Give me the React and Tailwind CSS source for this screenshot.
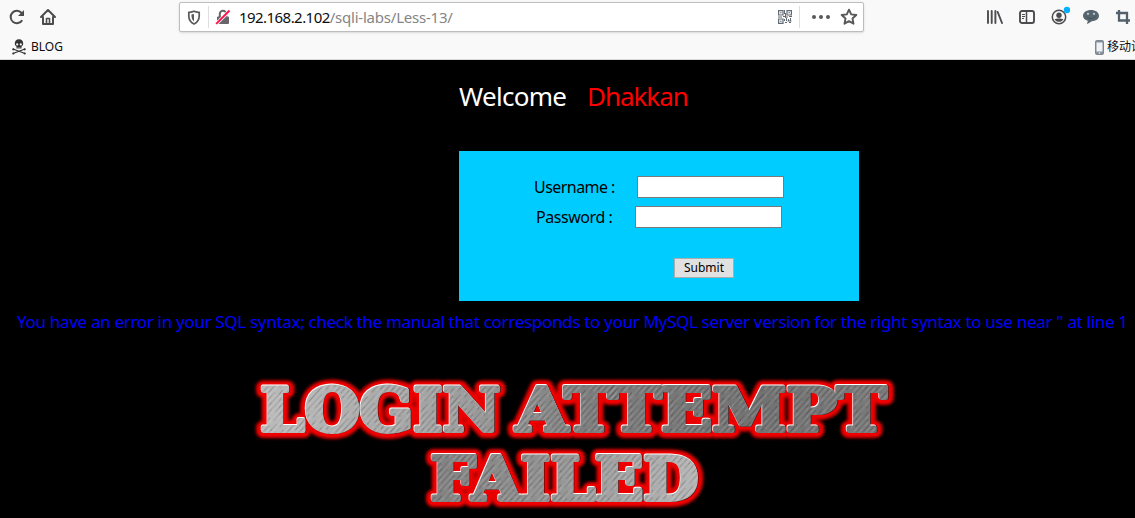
import React from "react";

const Reload = () => (
  <svg width="18" height="18" viewBox="0 0 18 18" fill="none" stroke="#4c4c4f" strokeWidth="2">
    <path d="M14.2 12.2A6.2 6.2 0 1 1 13.6 5" />
    <path d="M16 2v6h-6z" fill="#4c4c4f" stroke="none" />
  </svg>
);

const Home = () => (
  <svg width="18" height="18" viewBox="0 0 18 18" fill="none" stroke="#4c4c4f" strokeWidth="2" strokeLinecap="round" strokeLinejoin="round">
    <path d="M2 9l7-7 7 7M4 9v7h10V9" />
    <path d="M7.5 15.5v-5h3v5" strokeWidth="1.6" />
  </svg>
);

const Shield = () => (
  <svg width="14" height="15" viewBox="0 0 14 15" fill="none">
    <path d="M7 1.2c2 .9 3.700 1 5.200 1.200v3.600c0 4-2 6.500-5.200 8-3.200-1.500-5.200-4-5.200-8V2.400C3.300 2.200 5 2.100 7 1.200z" stroke="#5a5a5d" strokeWidth="1.700" />
    <path d="M7 4v7.500C5.200 10.300 4.500 8.500 4.400 4.600z" fill="#5a5a5d" />
  </svg>
);

const LockOff = () => (
  <svg width="16" height="16" viewBox="0 0 16 16" fill="none">
    <path d="M4.800 8V5a3.200 3.200 0 0 1 6.400 0v3" stroke="#65656a" strokeWidth="2" />
    <rect x="2" y="7.500" width="12" height="7.500" rx="1" fill="#65656a" />
    <path d="M1 15.200L14.500 1.700" stroke="#f9f9fa" strokeWidth="3.400" />
    <path d="M1.200 14.800L14.500 1.500" stroke="#ff0f4b" strokeWidth="1.900" />
  </svg>
);

const QrCode = () => (
  <svg width="14" height="14" viewBox="0 0 14 14" fill="none" stroke="#626a73">
    <path d="M.6.600h4.400v4.400H.600zM9 .600h4.400v4.400H9zM.600 9h4.400v4.400H.600z" strokeWidth="1.200" />
    <path d="M2 2.800h1.600M10.400 2.800H12M2 11.200h1.600M6.500 0v4M7.500 3v5M0 7h4M5 6.500h2M8 7h2M11 6.500h3M6.500 9v2M8.500 8v3M7 12.500h2M10.500 9v2M12.500 8v3M11 12.500h2M9.500 11h4" />
  </svg>
);

const Star = () => (
  <svg width="18" height="18" viewBox="0 0 18 18" fill="none" stroke="#58585b" strokeWidth="1.900" strokeLinejoin="round">
    <path d="M9 1.700l2.200 4.700 5.100.6-3.800 3.500 1 5.200L9 13.200l-4.500 2.500 1-5.200L1.700 7l5.100-.6z" />
  </svg>
);

const Library = () => (
  <svg width="18" height="16" viewBox="0 0 18 16" stroke="#4c4c4f" strokeWidth="1.900" strokeLinecap="round">
    <path d="M2 2v12M5.700 2v12M9.400 2v12M11.700 3L16 14" />
  </svg>
);

const Sidebar = () => (
  <svg width="16" height="14" viewBox="0 0 16 14" fill="none" stroke="#4c4c4f">
    <rect x="1" y="1" width="14" height="12" rx="2" strokeWidth="1.900" />
    <path d="M7.500 1v12" strokeWidth="1.500" />
    <path d="M3 4.500h3M3 6.500h3M3 8.500h2" />
  </svg>
);

const Account = () => (
  <svg width="20" height="20" viewBox="0 0 20 20" fill="none">
    <circle cx="9" cy="11" r="6.700" stroke="#4c4c4f" strokeWidth="1.500" />
    <circle cx="9" cy="9.300" r="2.700" fill="#4c4c4f" />
    <path d="M4.500 13.200c2-.9 7-.9 9 0-1 1.700-2.700 2.600-4.500 2.600s-3.500-.9-4.500-2.600z" fill="#4c4c4f" />
    <circle cx="17" cy="4" r="3.200" fill="#00b0ff" />
  </svg>
);

const Chat = () => (
  <svg width="18" height="16" viewBox="0 0 18 16">
    <path d="M9 1c4.500 0 8 2.400 8 5.700S13.700 12 9.800 12.200L5 15.200l.8-3.500C3 11 1 9.200 1 6.700 1 3.400 4.500 1 9 1z" fill="#57656f" />
    <circle cx="6" cy="4.800" r="1.100" fill="#c6ced3" />
    <circle cx="12" cy="4.800" r="1.100" fill="#c6ced3" />
    <path d="M4.500 7.500c2 2.600 7 2.600 9 0" fill="none" stroke="#44515a" />
  </svg>
);

const Crop = () => (
  <svg width="16" height="16" viewBox="0 0 16 16" fill="none" stroke="#53606b" strokeWidth="2.300">
    <path d="M4 1v10.500h11M1 4h11v11" />
  </svg>
);

const Skull = () => (
  <svg width="14" height="16" viewBox="0 0 14 16">
    <path d="M1 10l12 4.500M13 10l-12 4.500" stroke="#333" strokeWidth="1.300" />
    <circle cx="1.300" cy="10.300" r="1.100" fill="#333" />
    <circle cx="12.700" cy="10.300" r="1.100" fill="#333" />
    <circle cx="1.300" cy="14.500" r="1.100" fill="#333" />
    <circle cx="12.700" cy="14.500" r="1.100" fill="#333" />
    <path d="M7 .3c2.700 0 4.200 1.800 4.200 4.200 0 1.600-.6 2.300-1.700 2.900v2.200h-5V7.400C3.400 6.800 2.800 6.100 2.800 4.500 2.800 2.100 4.300.3 7 .3z" fill="#333" />
    <circle cx="5.200" cy="5.400" r="1.100" fill="#f9f9fa" />
    <circle cx="8.800" cy="5.400" r="1.100" fill="#f9f9fa" />
    <path d="M6 8.200v1.300M8 8.200v1.300" stroke="#f9f9fa" strokeWidth=".6" />
  </svg>
);

const Phone = () => (
  <svg className="shrink-0" width="9" height="15" viewBox="0 0 9 15">
    <rect x=".5" y=".5" width="8" height="14" rx="1.200" fill="#87919b" stroke="#7d8790" />
    <rect x="1.500" y="2.500" width="6" height="9" fill="#eef2f5" />
    <circle cx="4.500" cy="13" r=".8" fill="#eef2f5" />
  </svg>
);

const words = [
  { text: "LOGIN", x: 260.5, y: 60.5, width: 240 },
  { text: "ATTEMPT", x: 516, y: 60.5, width: 370.5 },
  { text: "FAILED", x: 430.5, y: 129.5, width: 268 },
];

const Words = (props) =>
  words.map((w) => (
    <text key={w.text} x={w.x} y={w.y} textLength={w.width} lengthAdjust="spacingAndGlyphs" {...props}>
      {w.text}
    </text>
  ));

const Banner = () => (
  <svg className="block shrink-0 [font-family:'DejaVu_Serif',serif] text-[59px] font-bold" width="1135" height="148" viewBox="0 0 1135 148" strokeLinejoin="round">
    <defs>
      <linearGradient id="steel" gradientUnits="userSpaceOnUse" x1="259" y1="20" x2="888" y2="60">
        <stop offset="0" stopColor="#bcbcbc" />
        <stop offset=".3" stopColor="#a0a0a0" />
        <stop offset=".4" stopColor="#909090" />
        <stop offset=".52" stopColor="#7d7d7d" />
        <stop offset=".8" stopColor="#727272" />
        <stop offset="1" stopColor="#7a7a7a" />
      </linearGradient>
      <linearGradient id="steelLow" gradientUnits="userSpaceOnUse" x1="429" y1="90" x2="700" y2="120">
        <stop offset="0" stopColor="#808080" />
        <stop offset=".4" stopColor="#909090" />
        <stop offset="1" stopColor="#b6b6b6" />
      </linearGradient>
      <pattern id="brush" width="29" height="9" patternUnits="userSpaceOnUse" patternTransform="rotate(-48)">
        <path d="M0 1h29M4 5h17" stroke="#fff" strokeOpacity=".16" strokeWidth=".8" />
        <path d="M0 3h23M8 7.500h21" stroke="#000" strokeOpacity=".16" strokeWidth=".8" />
      </pattern>
      <filter id="glow" x="-5%" y="-30%" width="110%" height="160%">
        <feGaussianBlur stdDeviation="1.7" />
      </filter>
    </defs>
    <g filter="url(#glow)"><Words fill="#e80000" stroke="#e80000" strokeWidth="14" /></g>
    <Words fill="#f00000" stroke="#f00000" strokeWidth="9" />
    <g transform="translate(.5 .5)"><Words fill="#3c1010" stroke="#3c1010" strokeWidth="4.200" /></g>
    <g transform="translate(-.6 -.6)"><Words fill="#fff" stroke="#fff" strokeWidth="4" /></g>
    <g transform="translate(.1 .1)">
      {words.map((w) => {
        const metal = w.text === "FAILED" ? "url(#steelLow)" : "url(#steel)";
        return (
          <text key={w.text} x={w.x} y={w.y} textLength={w.width} lengthAdjust="spacingAndGlyphs" fill={metal} stroke={metal} strokeWidth="4">
            {w.text}
          </text>
        );
      })}
      <g aria-hidden="true"><Words fill="url(#brush)" stroke="url(#brush)" strokeWidth="4" /></g>
    </g>
  </svg>
);

export default function App() {
  return (
    <div className="flex h-[518px] w-[1135px] flex-col overflow-hidden bg-black [font-family:'Noto_Sans','Noto_Sans_CJK_SC',sans-serif]">
      <header className="h-[60px] shrink-0 border-b border-[#d8d8d8] bg-[#f9f9fa]">
        <div className="flex h-[34px] items-center">
          <div className="flex w-[179px] gap-[13px] pl-2">
            <Reload />
            <Home />
          </div>
          <div className="flex h-[30px] w-[685px] items-center rounded-xs border border-[#bdbdbf] bg-white pl-[7px] shadow-sm">
            <Shield />
            <div className="mr-[6px] ml-[7px] h-[22px] w-px bg-[#dedede]" />
            <LockOff />
            <div className="ml-[8px] flex-1 whitespace-nowrap text-[15px] leading-5 text-[#858585]">
              <span className="tracking-[-0.55px] text-[#0c0c0d]">192.168.2.102</span>
              <span className="tracking-[-0.22px]">/sqli-labs/Less-13/</span>
            </div>
            <QrCode />
            <div className="mr-3 ml-[7px] h-[22px] w-px bg-[#dedede]" />
            <div className="flex gap-[3px]">
              <i className="size-1 rounded-full bg-[#58585b]" />
              <i className="size-1 rounded-full bg-[#58585b]" />
              <i className="size-1 rounded-full bg-[#58585b]" />
            </div>
            <div className="mr-[5px] ml-[10px]"><Star /></div>
          </div>
          <div className="flex items-center pl-[122px]">
            <Library />
            <div className="ml-[15px]"><Sidebar /></div>
            <div className="-mt-[3px] ml-[15px]"><Account /></div>
            <div className="ml-3"><Chat /></div>
            <div className="ml-[15px]"><Crop /></div>
          </div>
        </div>
        <div className="flex h-[25px] items-center justify-between overflow-hidden pt-px text-[12px] text-[#0c0c0d]">
          <div className="flex items-center gap-[5px] pl-3">
            <Skull />
            <span>BLOG</span>
          </div>
          <div className="flex w-[40px] items-center gap-[3px] whitespace-nowrap">
            <Phone />
            <span>移动设</span>
          </div>
        </div>
      </header>
      <main className="flex flex-1 flex-col">
        <h1 className="flex h-[91px] pt-[17px] pl-[459px] text-[26px] leading-[38px] text-white">
          <span className="w-[128px] tracking-[-0.7px]">Welcome</span>
          <span className="tracking-[-1.05px] text-[#f00]">Dhakkan</span>
        </h1>
        <form className="ml-[459px] flex h-[150px] w-[400px] shrink-0 flex-col bg-[#00ccff] pt-[25px] text-[16px] leading-[22px] text-black">
          <label className="flex h-[30px] pl-[75px]">
            <span className="w-[103px] tracking-[-0.55px]">Username :</span>
            <input className="h-[22px] w-[147px] border border-[#7a7a7a] bg-white" />
          </label>
          <label className="flex h-[30px] pl-[77px]">
            <span className="w-[99px] tracking-[-0.45px]">Password :</span>
            <input className="h-[22px] w-[147px] border border-[#7a7a7a] bg-white" />
          </label>
          <button type="button" className="mt-[22px] ml-[215px] h-5 w-[60px] border border-[#adadad] bg-[#e1e1e1] text-[12px] leading-[18px]">Submit</button>
        </form>
        <p className="h-[69px] shrink-0 pt-[9px] pl-[17px] text-[17px] leading-6 tracking-[-0.31px] whitespace-nowrap text-[#00f]">
          You have an error in your SQL syntax; check the manual that corresponds to your MySQL server version for the right syntax to use near '' at line 1
        </p>
        <Banner />
      </main>
    </div>
  );
}
